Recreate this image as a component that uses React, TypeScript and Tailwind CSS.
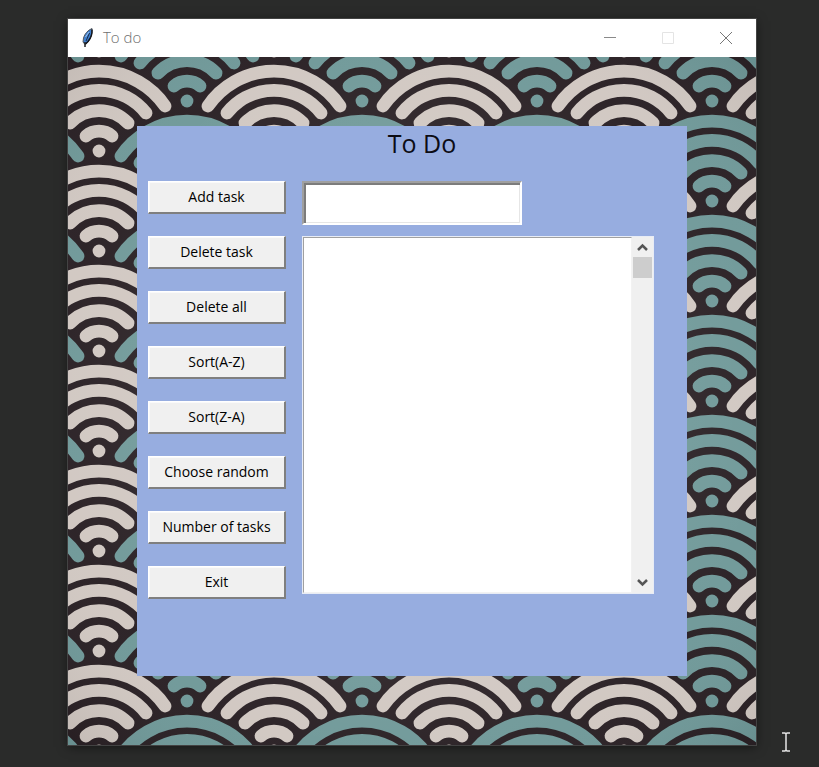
const CREAM = "#d1c8c2";
const TEAL = "#709999";
const ARCS = [
  { r: 80, dx: 66, dy: 45 },
  { r: 60, dx: 47, dy: 38 },
  { r: 40, dx: 29, dy: 28 },
  { r: 20, dx: 13, dy: 15 },
];

function Fan({ x, y, color }: { x: number; y: number; color: string }) {
  return (
    <g transform={`translate(${x} ${y})`}>
      {ARCS.map(({ r, dx, dy }) => (
        <path
          key={r}
          d={`M${-dx} ${-dy}A${r} ${r} 0 0 1 ${dx} ${-dy}`}
          fill="none"
          stroke={color}
          strokeWidth={12.8}
          strokeLinecap="round"
        />
      ))}
      <circle r={6.4} fill={color} />
    </g>
  );
}

function WavePattern() {
  const fans = [];
  for (let col = -1; col <= 1; col++) {
    for (let row = -1; row <= 2; row++) {
      fans.push(<Fan key={`c${col},${row}`} x={31 + col * 175} y={94 + row * 100} color={CREAM} />);
      fans.push(<Fan key={`t${col},${row}`} x={119 + col * 175} y={44 + row * 100} color={TEAL} />);
    }
  }
  return (
    <svg aria-hidden="true" className="absolute inset-0 h-full w-full">
      <defs>
        <pattern id="waves" width="175" height="100" patternUnits="userSpaceOnUse">
          <rect width="175" height="100" fill="#2a2125" />
          {fans}
        </pattern>
        <radialGradient id="light" cx="50%" cy="50%" r="70%">
          <stop offset="0.4" stopColor="#ffffff" stopOpacity="0.08" />
          <stop offset="0.75" stopColor="#ffffff" stopOpacity="0.02" />
          <stop offset="1" stopColor="#000000" stopOpacity="0.06" />
        </radialGradient>
      </defs>
      <rect width="100%" height="100%" fill="url(#waves)" />
      <rect width="100%" height="100%" fill="url(#light)" />
    </svg>
  );
}

function Feather() {
  return (
    <svg aria-hidden="true" width="16" height="20" viewBox="0 0 16 20">
      <path d="M12 .5C8 2 4.500 6 3.500 10L3 14l2 2.500 3-2.500c2.500-3 4.500-8.500 4-13.500Z" fill="#3f7fce" stroke="#55585e" strokeWidth="1" />
      <path d="M12 1.500c.3 4-1.500 9-4 12l-2.500 2.500" fill="none" stroke="#14161c" strokeWidth="1.500" />
      <path d="M9.500 5 6 13" stroke="#1b2c48" strokeWidth="1" />
      <path d="M9 4 5.500 9" stroke="#9fc4ee" strokeWidth="1" />
      <path d="M5 14v5" stroke="#222" strokeWidth="1.500" />
    </svg>
  );
}

function TitleBar() {
  return (
    <header className="flex h-[38px] items-center bg-white pl-3 pr-6 text-[#8a8a8a]">
      <Feather />
      <h1 className="ml-[7px] flex-1 pb-0.5 text-[15px] font-light leading-5 text-[#707070]">To do</h1>
      <div className="flex gap-[46px]">
        <button aria-label="Minimize" className="block h-3 w-3">
          <svg width="12" height="12" fill="none" stroke="currentColor"><path d="M0 5.500h12" /></svg>
        </button>
        <button aria-label="Maximize" disabled className="block h-3 w-3 text-[#e4e4e4]">
          <svg width="12" height="12" fill="none" stroke="currentColor"><path d="M.5.500h11v11H.500z" /></svg>
        </button>
        <button aria-label="Close" className="block h-3 w-3">
          <svg width="12" height="12" fill="none" stroke="#777"><path d="m0 0 12 12M12 0 0 12" /></svg>
        </button>
      </div>
    </header>
  );
}

const ACTIONS = [
  "Add task",
  "Delete task",
  "Delete all",
  "Sort(A-Z)",
  "Sort(Z-A)",
  "Choose random",
  "Number of tasks",
  "Exit",
];

function ScrollBar() {
  return (
    <div className="flex w-[21px] flex-col items-center bg-[#f0f0f0]">
      <button aria-label="Scroll up" className="flex h-5 w-full items-center justify-center">
        <svg width="11" height="8" fill="none" stroke="#555" strokeWidth="2.500"><path d="m1 7 4.500-4.500L10 7" /></svg>
      </button>
      <div className="h-[21px] w-[19px] bg-[#cdcdcd]" />
      <button aria-label="Scroll down" className="mt-auto flex h-5 w-full items-center justify-center">
        <svg width="11" height="8" fill="none" stroke="#555" strokeWidth="2.500"><path d="m1 1 4.500 4.500L10 1" /></svg>
      </button>
    </div>
  );
}

export default function App() {
  return (
    <div className="relative min-h-screen bg-[#2a2b2a] pb-[22px] pl-[68px] pr-[63px] pt-[19px] font-['Open_Sans','Noto_Sans',sans-serif]">
      <div className="shadow-[0_2px_10px_rgba(0,0,0,0.5)] outline outline-1 outline-[#434343]">
        <TitleBar />
        <main className="relative p-[69px]">
          <WavePattern />
          <section className="relative bg-[#97ade0] pb-[77px] pl-[11px] pr-[33px]">
            <h2 className="-mr-[22px] h-[55px] pl-5 text-center text-[25px] leading-[34px] text-[#0c0c14]">To Do</h2>
            <div className="flex gap-4">
              <div className="flex w-[138px] flex-col gap-[22px]">
                {ACTIONS.map((label) => (
                  <button
                    key={label}
                    className="h-[33px] border-b-2 border-l border-r-2 border-t border-b-[#7f7f7f] border-l-white border-r-[#7f7f7f] border-t-white bg-[#f0f0f0] text-sm leading-5 text-black shadow-[inset_1px_1px_0_#fafafa]"
                  >
                    {label}
                  </button>
                ))}
              </div>
              <div className="mb-[5px] flex flex-1 flex-col gap-[11px]">
                <input
                  aria-label="New task"
                  className="h-11 w-[220px] border-2 border-b-white border-l-[#a0a0a0] border-r-white border-t-[#a0a0a0] bg-white px-1 text-sm shadow-[inset_2px_2px_0_#7c7c7c,inset_-1px_-1px_0_#e6e6e6] outline-none"
                />
                <div className="flex flex-1 border border-[#e8ecf5]">
                  <ul aria-label="Tasks" className="flex-1 border border-b-[#f2f2f2] border-l-[#a0a0a0] border-r-[#f2f2f2] border-t-[#a0a0a0] bg-white" />
                  <ScrollBar />
                </div>
              </div>
            </div>
          </section>
        </main>
      </div>
      <svg aria-hidden="true" className="absolute bottom-[15px] right-7 h-5 w-2.5" viewBox="0 0 10 20" fill="none" stroke="#e6e6e6" strokeWidth="1.500">
        <path d="M1 1h3l1 1 1-1h3M5 2v16M1 19h3l1-1 1 1h3" />
      </svg>
    </div>
  );
}
